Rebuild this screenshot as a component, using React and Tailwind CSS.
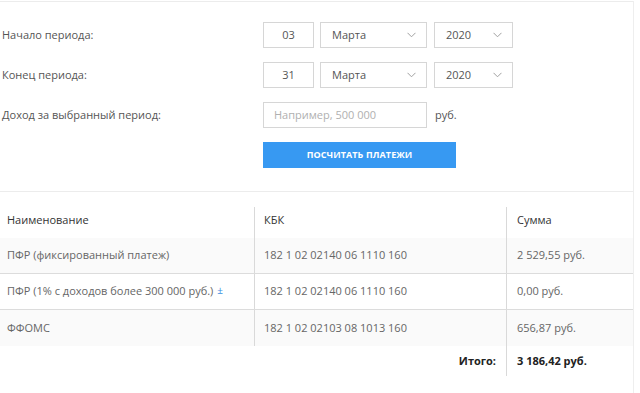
import React from "react";

const rows = [
  { name: "ПФР (фиксированный платеж)", kbk: "182 1 02 02140 06 1110 160", sum: "2 529,55 руб.", shade: true },
  { name: "ПФР (1% с доходов более 300 000 руб.)", kbk: "182 1 02 02140 06 1110 160", sum: "0,00 руб.", hint: true },
  { name: "ФФОМС", kbk: "182 1 02 02103 08 1013 160", sum: "656,87 руб.", shade: true, last: true },
];

function Chevron() {
  return (
    <svg width="9" height="6" viewBox="0 0 9 6" fill="none" className="shrink-0">
      <path d="M0.5 0.8 L4.5 4.8 L8.5 0.8" stroke="#a0a0a0" strokeWidth="1" />
    </svg>
  );
}

function Select({ value, w }) {
  return (
    <div className={`h-[26px] ${w} border border-[#d6d6d6] bg-white flex items-center justify-between pl-[11px] pr-[10px] text-[#555]`}>
      <span>{value}</span>
      <Chevron />
    </div>
  );
}

function DateRow({ label, day }) {
  return (
    <div className="flex items-center h-[26px]">
      <div className="w-[263px] pl-[2px] text-[#555]">{label}</div>
      <div className="w-[51px] h-[26px] border border-[#d6d6d6] flex items-center justify-center text-[#555]">{day}</div>
      <div className="ml-[6px]"><Select value="Марта" w="w-[107px]" /></div>
      <div className="ml-[7px]"><Select value="2020" w="w-[79px]" /></div>
    </div>
  );
}

export default function App() {
  return (
    <div className="w-[640px] h-[393px] bg-white overflow-hidden font-['Open_Sans',sans-serif] text-[11px]">
      <div className="w-[634px] h-[393px] border-r border-[#eeeeee]">
        {/* Form */}
        <div className="mt-[1px] h-[191px] border-t border-b border-[#ececec] pt-[20px] flex flex-col gap-[14px]">
          <DateRow label="Начало периода:" day="03" />
          <DateRow label="Конец периода:" day="31" />
          <div className="flex items-center h-[26px]">
            <div className="w-[263px] pl-[2px] text-[#555]">Доход за выбранный период:</div>
            <div className="w-[164px] h-[26px] border border-[#d6d6d6] flex items-center pl-[10px] text-[#b0b0b0]">
              Например, 500 000
            </div>
            <span className="ml-[8px] text-[#555]">руб.</span>
          </div>
          <div className="flex h-[26px]">
            <div className="w-[263px]" />
            <button className="w-[193px] h-[26px] bg-[#3799f2] text-white text-[9px] font-bold tracking-[0.1px]">
              ПОСЧИТАТЬ ПЛАТЕЖИ
            </button>
          </div>
        </div>

        {/* Table */}
        <div className="mt-[15px]">
          <div className="flex h-[31px] text-[#333]">
            <div className="w-[255px] border-r border-[#d9d9d9] pl-[7px] pt-[5px]">Наименование</div>
            <div className="w-[252px] border-r border-[#d9d9d9] pl-[9px] pt-[5px]">КБК</div>
            <div className="flex-1 pl-[10px] pt-[5px]">Сумма</div>
          </div>
          {rows.map((r) => (
            <div
              key={r.name}
              className={`flex h-[36px] items-stretch text-[#666] ${r.shade ? "bg-[#fafafa]" : "bg-white"} ${r.last ? "" : "border-b border-[#dcdcdc]"}`}
            >
              <div className="w-[255px] border-r border-[#d9d9d9] pl-[7px] flex items-center">
                {r.name}
                {r.hint && <span className="ml-[4px] text-[#3b8fe0] text-[10px] leading-none -mt-[3px]">±</span>}
              </div>
              <div className="w-[252px] border-r border-[#d9d9d9] pl-[9px] flex items-center">{r.kbk}</div>
              <div className="flex-1 pl-[10px] flex items-center">{r.sum}</div>
            </div>
          ))}
          <div className="flex h-[30px] font-bold text-[#222]">
            <div className="w-[507px] border-r border-[#d9d9d9] pr-[10px] flex items-center justify-end">Итого:</div>
            <div className="flex-1 pl-[10px] flex items-center">3 186,42 руб.</div>
          </div>
        </div>
      </div>
    </div>
  );
}
